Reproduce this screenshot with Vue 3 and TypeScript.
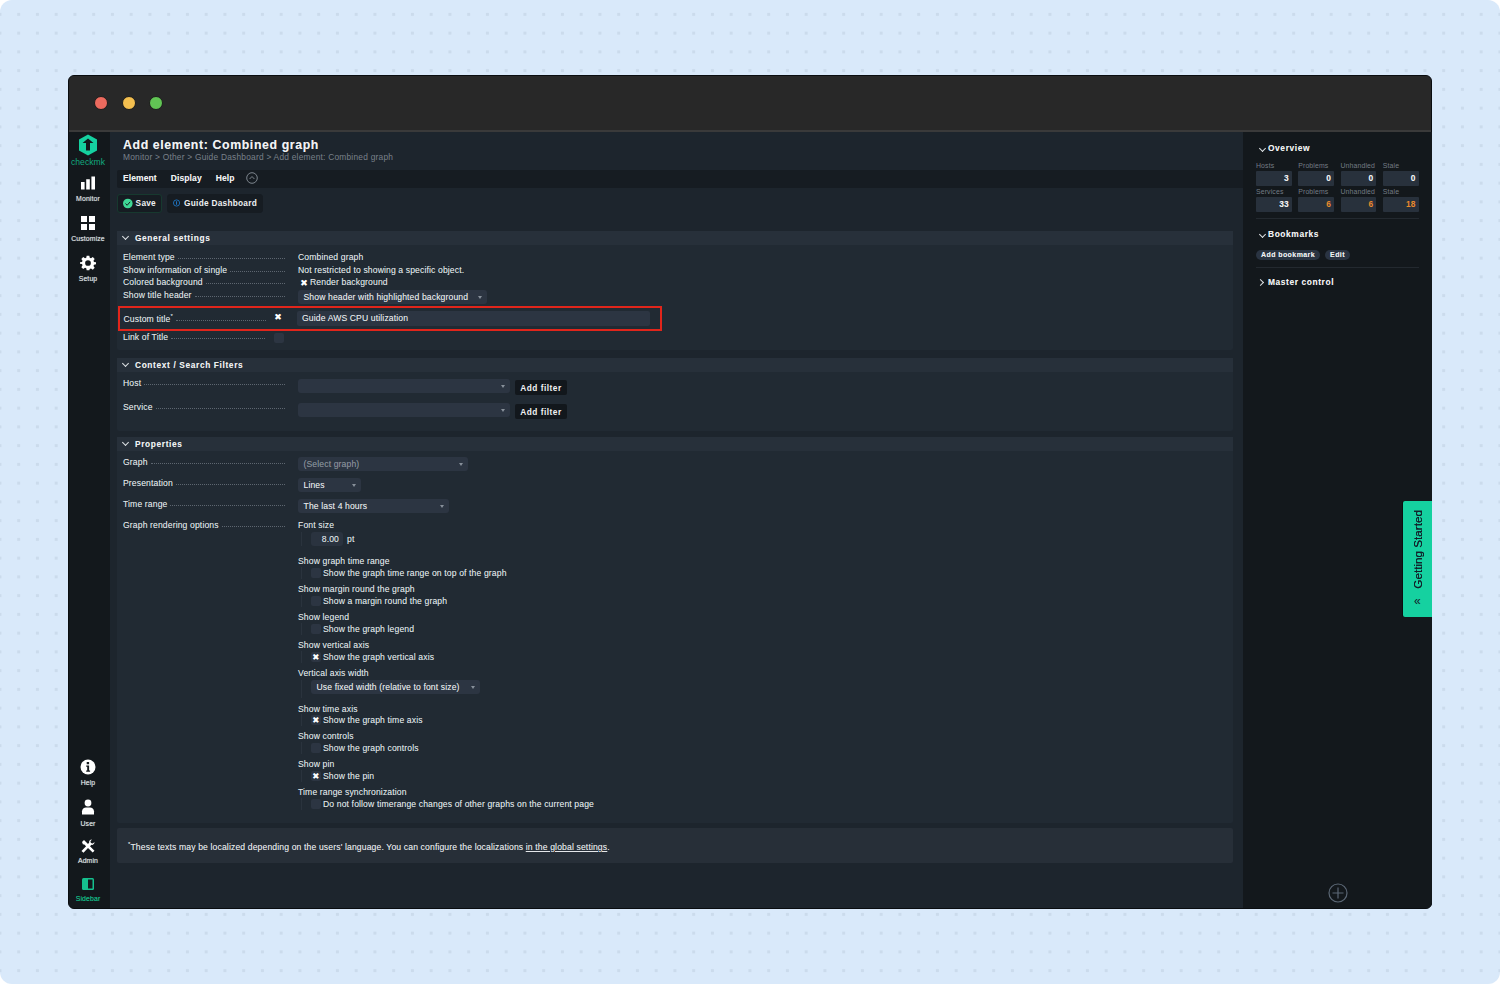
<script setup lang="ts">
const topRows = ['Element type', 'Show information of single']
const overview = [
  { labels: ['Hosts', 'Problems', 'Unhandled', 'Stale'], values: ['3', '0', '0', '0'], warn: false },
  { labels: ['Services', 'Problems', 'Unhandled', 'Stale'], values: ['33', '6', '6', '18'], warn: true },
]
const options1 = [
  { title: 'Show graph time range', text: 'Show the graph time range on top of the graph', on: false },
  { title: 'Show margin round the graph', text: 'Show a margin round the graph', on: false },
  { title: 'Show legend', text: 'Show the graph legend', on: false },
  { title: 'Show vertical axis', text: 'Show the graph vertical axis', on: true },
]
const options2 = [
  { title: 'Show time axis', text: 'Show the graph time axis', on: true },
  { title: 'Show controls', text: 'Show the graph controls', on: false },
  { title: 'Show pin', text: 'Show the pin', on: true },
  { title: 'Time range synchronization', text: 'Do not follow timerange changes of other graphs on the current page', on: false },
]
</script>

<template>
  <div class="page">
    <div class="window">
      <div class="titlebar">
        <span class="light red"></span><span class="light yellow"></span><span class="light green"></span>
      </div>
      <div class="app">
        <nav class="nav">
          <div class="logo">
            <svg width="20" height="22" viewBox="0 0 20 22"><path d="M10 0.5 19 5.5V16.5L10 21.5 1 16.5V5.5Z" fill="#15d1a0"/><path d="M4.500 9 10 4.500 15.500 9H12V16.500H8V9Z" fill="#13181c"/></svg>
            <span>checkmk</span>
          </div>
          <div class="nav-item first">
            <svg width="16" height="16" viewBox="0 0 16 16"><path d="M1 7h3.600v7.500H1zM6.200 4.200h3.600v10.300H6.200zM11.400 1.500H15v13h-3.600z" fill="#fff"/></svg>
            <span>Monitor</span>
          </div>
          <div class="nav-item">
            <svg width="16" height="16" viewBox="0 0 16 16"><path d="M1 1h6v6H1zM9 1h6v6H9zM1 9h6v6H1zM9 9h6v6H9z" fill="#fff"/></svg>
            <span>Customize</span>
          </div>
          <div class="nav-item">
            <svg width="16" height="16" viewBox="0 0 24 24"><path fill="#fff" fill-rule="evenodd" d="M10 1h4l.6 3.100 1.900.8 2.700-1.800 2.800 2.800-1.800 2.700.8 1.900L24 11v3l-3 .6-.8 1.900 1.800 2.700-2.800 2.800-2.700-1.800-1.900.8L14 23h-4l-.6-3-1.900-.8-2.700 1.800L2 18.200l1.800-2.700-.8-1.900L0 13v-2l3-.6.8-1.900L2 5.900 4.800 3.100l2.700 1.800 1.900-.8zM12 7.700a4.300 4.300 0 1 0 0 8.600 4.300 4.300 0 0 0 0-8.600z"/></svg>
            <span>Setup</span>
          </div>
          <div class="nav-spacer"></div>
          <div class="nav-item low help">
            <svg width="16" height="16" viewBox="0 0 16 16"><circle cx="8" cy="8" r="7.500" fill="#fff"/><path d="M6.700 3h2.400v2.200H6.700zM6.200 6.500h2.900v5h1v1.200H6.200v-1.200h1V7.700h-1z" fill="#13181c"/></svg>
            <span>Help</span>
          </div>
          <div class="nav-item low">
            <svg width="16" height="16" viewBox="0 0 16 16"><circle cx="8" cy="4" r="3.400" fill="#fff"/><path d="M2 15.500v-3.200C2 9.800 4 8.400 6 8.400h4c2 0 4 1.400 4 3.900v3.200z" fill="#fff"/></svg>
            <span>User</span>
          </div>
          <div class="nav-item admin">
            <svg width="14" height="14" viewBox="0 0 14 14"><path d="M1 3 3 1l4 4 1.200-1.400c-.4-1.400.7-3.100 2.800-3.100L9.400 2.200l.5 1.900 1.900.5L13.500 3c0 2.100-1.700 3.200-3.100 2.800L9 7.200l4.500 4.500-1.800 1.800L7 9l-4.500 4.700L.5 12l4.600-4.700L3 5.200l-1 .2z" fill="#fff"/></svg>
            <span>Admin</span>
          </div>
          <div class="nav-item sidebar-toggle">
            <svg width="12" height="12" viewBox="0 0 12 12"><rect width="12" height="12" rx="1.500" fill="#15c08e"/><rect x="6" y="1.500" width="4.500" height="9" fill="#13181c"/></svg>
            <span>Sidebar</span>
          </div>
        </nav>

        <main class="main">
          <header class="head">
            <h1>Add element: Combined graph</h1>
            <p>Monitor &gt; Other &gt; Guide Dashboard &gt; Add element: Combined graph</p>
          </header>
          <div class="menubar">
            <b>Element</b><b>Display</b><b>Help</b>
            <svg width="12" height="12" viewBox="0 0 12 12"><circle cx="6" cy="6" r="5.300" fill="none" stroke="#7d858d"/><path d="M3.600 7 6 4.500 8.400 7" fill="none" stroke="#7d858d"/></svg>
          </div>
          <div class="actions">
            <button class="btn save">
              <svg width="11" height="11" viewBox="0 0 11 11"><circle cx="5.500" cy="5.500" r="5.500" fill="#3fd896"/><path d="M2.800 5.600 4.800 7.500 8.200 3.600" fill="none" stroke="#13181c" stroke-width="1.100"/></svg>
              Save
            </button>
            <button class="btn guide">
              <svg width="10" height="10" viewBox="0 0 10 10"><circle cx="5" cy="5" r="4.400" fill="none" stroke="#1f7fd6" stroke-width="1.100"/><path d="M4.400 2.500h1.300v5H4.400z" fill="#1f7fd6"/></svg>
              Guide Dashboard
            </button>
          </div>

          <section class="card general">
            <div class="card-head"><i class="chev"></i>General settings</div>
            <div class="card-body">
              <div v-for="r in topRows" :key="r" class="row tight">
                <div class="lbl"><span>{{ r }}</span><em></em></div>
                <div class="val">{{ r === 'Element type' ? 'Combined graph' : 'Not restricted to showing a specific object.' }}</div>
              </div>
              <div class="row tight">
                <div class="lbl"><span>Colored background</span><em></em></div>
                <div class="val check-val"><span class="x">✖</span>Render background</div>
              </div>
              <div class="row tight">
                <div class="lbl"><span>Show title header</span><em></em></div>
                <div class="val"><div class="select s-header">Show header with highlighted background</div></div>
              </div>
              <div class="highlight">
                <div class="lbl custom"><span>Custom title<sup>*</sup></span><em></em></div>
                <span class="x standalone">✖</span>
                <div class="input-title">Guide AWS CPU utilization</div>
              </div>
              <div class="row link">
                <div class="lbl short"><span>Link of Title</span><em></em></div>
                <span class="box"></span>
              </div>
            </div>
          </section>

          <section class="card filters">
            <div class="card-head"><i class="chev"></i>Context / Search Filters</div>
            <div class="card-body">
              <div v-for="f in ['Host', 'Service']" :key="f" class="row filter">
                <div class="lbl"><span>{{ f }}</span><em></em></div>
                <div class="val inline"><div class="select s-filter"></div><button class="add">Add filter</button></div>
              </div>
            </div>
          </section>

          <section class="card props">
            <div class="card-head"><i class="chev"></i>Properties</div>
            <div class="card-body">
              <div class="row prop">
                <div class="lbl"><span>Graph</span><em></em></div>
                <div class="val"><div class="select s-graph">(Select graph)</div></div>
              </div>
              <div class="row prop">
                <div class="lbl"><span>Presentation</span><em></em></div>
                <div class="val"><div class="select s-lines">Lines</div></div>
              </div>
              <div class="row prop">
                <div class="lbl"><span>Time range</span><em></em></div>
                <div class="val"><div class="select s-time">The last 4 hours</div></div>
              </div>
              <div class="row render">
                <div class="lbl"><span>Graph rendering options</span><em></em></div>
                <div class="val opts">
                  <div class="opt font">
                    <div class="opt-title">Font size</div>
                    <div class="opt-sub"><div class="num">8.00</div><span class="unit">pt</span></div>
                  </div>
                  <div v-for="o in options1" :key="o.title" class="opt">
                    <div class="opt-title">{{ o.title }}</div>
                    <div class="opt-sub"><span class="box small"><span v-if="o.on" class="x">✖</span></span>{{ o.text }}</div>
                  </div>
                  <div class="opt axis">
                    <div class="opt-title">Vertical axis width</div>
                    <div class="opt-sub tall"><div class="select s-axis">Use fixed width (relative to font size)</div></div>
                  </div>
                  <div v-for="o in options2" :key="o.title" class="opt">
                    <div class="opt-title">{{ o.title }}</div>
                    <div class="opt-sub"><span class="box small"><span v-if="o.on" class="x">✖</span></span>{{ o.text }}</div>
                  </div>
                </div>
              </div>
            </div>
          </section>

          <div class="foot"><sup>*</sup>These texts may be localized depending on the users' language. You can configure the localizations <u>in the global settings</u>.</div>
        </main>

        <aside class="side">
          <div class="side-title"><i class="chev"></i>Overview</div>
          <div class="stats">
            <template v-for="(g, gi) in overview" :key="gi">
              <div v-for="(l, i) in g.labels" :key="l + i" class="stat">
                <span>{{ l }}</span>
                <b :class="{ warn: g.warn && i > 0 }">{{ g.values[i] }}</b>
              </div>
            </template>
          </div>
          <div class="rule r1"></div>
          <div class="side-title"><i class="chev"></i>Bookmarks</div>
          <div class="pills"><span>Add bookmark</span><span>Edit</span></div>
          <div class="rule r2"></div>
          <div class="side-title master"><i class="chev right"></i>Master control</div>
          <svg class="plus" width="20" height="20" viewBox="0 0 20 20"><circle cx="10" cy="10" r="9" fill="none" stroke="#5b6775" stroke-width="1.200"/><path d="M10 4.500v11M4.500 10h11" stroke="#5b6775" stroke-width="1.200"/></svg>
        </aside>
      </div>
      <div class="started"><span class="st-text">Getting Started</span><span class="st-ch">«</span></div>
    </div>
  </div>
</template>

<style>
html, body { margin: 0; background: #fff; }
</style>

<style scoped>
.page {
  box-sizing: border-box;
  width: 1500px;
  height: 984px;
  padding: 75px 68px;
  overflow: hidden;
  border-radius: 12px;
  background-color: #d9e9fa;
  background-image: radial-gradient(circle, #cbdbec 1.500px, transparent 2px);
  background-size: 18.750px 18.750px;
  background-position: 9.300px 5px;
  font-family: "Liberation Sans", Arial, sans-serif;
  color: #e4e7ea;
  font-size: 8.600px;
  letter-spacing: 0.13px;
  text-shadow: 0 0 0.6px rgba(255, 255, 255, 0.4);
}
.window {
  position: relative;
  box-sizing: border-box;
  height: 834px;
  border: 1px solid #0a0d10;
  border-radius: 6px;
  display: flex;
  flex-direction: column;
  background: #13181c;
}
.titlebar {
  flex: none;
  background: #282828;
  border-bottom: 2px solid #3a3a3a;
  border-radius: 5px 5px 0 0;
  display: flex;
  align-items: center;
  gap: 13.500px;
  padding-left: 25px;
  height: 54px;
}
.light { width: 14px; height: 14px; border-radius: 50%; border: 1px solid #1c1c1c; box-sizing: border-box; }
.red { background: #ec6a5e; }
.yellow { background: #f4bf4f; }
.green { background: #61c554; }
.app { flex: 1; display: flex; min-height: 0; }
.nav {
  flex: none;
  width: 41px;
  background: #13181c;
  display: flex;
  flex-direction: column;
  align-items: center;
  padding: 2px 3px 5px 0;
  box-sizing: border-box;
  border-radius: 0 0 0 5px;
}
.logo { display: flex; flex-direction: column; align-items: center; color: #12a97e; font-size: 8.600px; line-height: 10px; letter-spacing: 0; text-shadow: none; }
.logo span { margin-top: 1px; }
.nav-item { display: flex; flex-direction: column; align-items: center; height: 40px; gap: 4px; }
.nav-item.first { margin-top: 8px; }
.nav-item span { font-size: 6.900px; line-height: 8px; color: #dfe2e5; letter-spacing: 0.12px; text-shadow: 0 0 0.7px rgba(255, 255, 255, 0.6); }
.nav-spacer { flex: 1; }
.nav-item.low { gap: 5px; }
.nav-item.help { gap: 4px; }
.nav-item.admin { height: 39px; gap: 4px; }
.sidebar-toggle { height: 25px; gap: 5px; }
.sidebar-toggle span { color: #14c08c; text-shadow: 0 0 0.5px rgba(20, 192, 140, 0.6); }
.main { flex: none; width: 1133px; background: #1d252d; box-sizing: border-box; padding-left: 7px; }
.head { height: 38px; padding: 7px 0 0 6px; box-sizing: border-box; }
.head h1 { margin: 0; font-size: 12.300px; line-height: 13px; font-weight: 700; letter-spacing: 0.63px; color: #f2f3f4; }
.head p { margin: -0.500px 0 0; font-size: 8.400px; line-height: 10px; color: #79818a; letter-spacing: 0.22px; text-shadow: none; }
.menubar { height: 18px; background: #161c22; display: flex; align-items: center; padding: 0 0 2px 6px; box-sizing: border-box; border-radius: 2px 0 0 2px; }
.menubar b { font-size: 8.500px; margin-right: 14px; color: #f0f1f2; letter-spacing: 0.1px; }
.menubar svg { margin-left: -3px; }
.actions { display: flex; gap: 5px; height: 19px; margin-top: 6px; }
.btn { display: flex; align-items: center; gap: 3px; height: 19px; padding: 0 5px 1px; border-radius: 3px; background: #161c22; border: 1px solid #161c22; color: #eef0f1; font: 700 8.300px "Liberation Sans", Arial, sans-serif; letter-spacing: 0.25px; box-sizing: border-box; white-space: nowrap; }
.guide { width: 96px; gap: 4px; }
.save { width: 45px; border-color: #17392f; }
.card { margin-right: 10px; background: #212a33; border-radius: 2px; }
.general { margin-top: 18px; height: 119px; }
.filters { margin-top: 8px; height: 73px; }
.props { margin-top: 6px; height: 386px; }
.card-head { height: 14px; background: #27303a; display: flex; align-items: center; padding-left: 6px; font-weight: 700; font-size: 8.300px; letter-spacing: 0.65px; color: #eef0f1; }
.chev { display: inline-block; width: 4px; height: 4px; border-right: 1px solid #dfe2e5; border-bottom: 1px solid #dfe2e5; transform: rotate(45deg); margin: -3px 7px 0 0; }
.chev.right { transform: rotate(-45deg); margin: 0 6px 0 -2px; }
.card-body { position: relative; padding-left: 6px; }
.row { display: flex; }
.tight { height: 12.670px; line-height: 13px; }
.general .card-body { padding-top: 6px; }
.lbl { flex: none; width: 162px; display: flex; align-items: baseline; gap: 3px; color: #dfe2e5; line-height: 13px; height: 13px; }
.lbl span { white-space: nowrap; }
.lbl em { flex: 1; border-bottom: 1px dotted #5d6670; height: 0; transform: translateY(-1px); }
.val { margin-left: 13px; color: #dfe2e5; white-space: nowrap; line-height: 13px; }
.check-val { display: flex; align-items: center; }
.check-val .x { width: 12px; margin-left: 0; }
.x { display: inline-block; color: #fff; font-size: 9px; line-height: 10px; text-align: center; font-family: "DejaVu Sans", sans-serif; }
.select { position: relative; box-sizing: border-box; height: 14px; line-height: 15px; padding-left: 5.500px; background: #2c3542; border-radius: 3px; color: #e4e7ea; }
.select::after { content: ""; position: absolute; right: 5px; top: 6px; border-left: 2.500px solid transparent; border-right: 2.500px solid transparent; border-top: 3px solid #87909a; }
.s-header { width: 189px; margin-top: -4px; transform: translateY(5px); }
.highlight { position: relative; box-sizing: border-box; margin: 4px 0 0 -5px; width: 544px; height: 25px; border: 2px solid #e1251b; display: flex; align-items: center; padding-left: 3.500px; }
.lbl.custom { width: 142px; margin-top: 3px; }
.lbl.custom sup { font-size: 6px; line-height: 0; }
.standalone { position: absolute; left: 153px; top: 4px; width: 10px; font-size: 9px; }
.input-title { position: absolute; left: 177px; top: 3px; width: 353px; height: 15px; line-height: 15px; background: #2c3542; border-radius: 2px; padding-left: 5px; box-sizing: border-box; color: #e4e7ea; }
.link { margin-top: 0; height: 13px; align-items: flex-start; }
.lbl.short { width: 142px; }
.box { flex: none; display: inline-flex; align-items: center; justify-content: center; width: 10px; height: 10px; margin: 2px 0 0 9px; background: #2c3542; border-radius: 2px; }
.filters .card-body { padding-top: 5px; }
.filter { height: 24px; }
.inline { display: flex; gap: 5px; }
.s-filter { width: 212px; margin-top: 2px; }
.add { height: 15px; width: 52px; padding: 0; margin-top: 3px; border: 0; background: #12171c; color: #f0f1f2; border-radius: 2px; font: 700 8.300px "Liberation Sans", Arial, sans-serif; letter-spacing: 0.5px; }
.props .card-body { padding-top: 5px; }
.prop { height: 21px; }
.prop .select { margin-top: 1px; }
.s-graph { width: 170px; color: #7d858f; }
.s-lines { width: 63px; }
.s-time { width: 151px; }
.opts { display: flex; flex-direction: column; white-space: nowrap; }
.opt { height: 28px; }
.opt-title { height: 12px; line-height: 12px; color: #dfe2e5; }
.opt-sub { margin-left: 3px; padding-left: 9px; height: 12px; border-left: 1px solid #2a333d; display: flex; align-items: center; line-height: 12px; color: #dfe2e5; }
.box.small { margin: 0 2px 0 0; width: 10px; height: 10px; }
.box.small .x { font-size: 8.500px; }
.opt.font { height: 36px; }
.font .opt-sub { height: 14px; margin-top: 1px; }
.num { width: 32px; height: 14px; box-sizing: border-box; line-height: 14px; text-align: right; padding-right: 4px; background: #2a333f; border-radius: 3px; }
.unit { margin-left: 4px; }
.opt.axis { height: 36px; }
.opt-sub.tall { height: 18px; padding-left: 9px; align-items: flex-start; margin-top: 1px; }
.s-axis { width: 169px; }
.opt.axis + .opt { height: 27px; }
.opt.axis + .opt .opt-title { height: 11px; }
.foot { margin: 5px 10px 0 0; height: 35px; line-height: 38px; background: #272f38; padding-left: 11px; border-radius: 2px; color: #e4e7ea; letter-spacing: 0.14px; }
.foot sup { font-size: 6px; line-height: 0; }
.side { position: relative; flex: 1; background: #13181c; padding: 11px 13px 0; box-sizing: border-box; border-radius: 0 0 5px 0; }
.side-title { font-weight: 700; font-size: 8.400px; letter-spacing: 0.6px; color: #f0f1f2; line-height: 10px; padding-left: 4px; }
.side-title .chev { margin-right: 3px; }
.side-title .chev.right { margin: 0 5px 0 -2px; }
.stats { display: grid; grid-template-columns: repeat(4, 35.750px); column-gap: 6.500px; margin-top: 7.500px; }
.stat { height: 26px; display: flex; flex-direction: column; }
.stat span { height: 10px; line-height: 10px; font-size: 6.900px; color: #747c85; text-shadow: none; }
.stat b { height: 15px; line-height: 15px; background: #28313c; text-align: right; padding-right: 3px; font-size: 8.400px; color: #eef0f1; border-radius: 1px; }
.stat b.warn { color: #e98a2d; text-shadow: none; }
.rule { height: 1px; background: #23292f; }
.r1 { margin: 5.500px 0 10px; }
.pills { display: flex; gap: 5px; margin-top: 11px; }
.pills span { height: 10px; line-height: 10px; padding: 0 5px; border-radius: 5px; background: #2a3442; font-size: 7px; font-weight: 700; letter-spacing: 0.42px; color: #eef0f1; }
.r2 { margin: 7px 0 9px; }
.plus { position: absolute; left: 85px; top: 751px; }
.started { position: absolute; right: -1px; top: 425px; width: 29px; height: 116px; background: #15d1a0; border-radius: 2px 0 0 2px; box-shadow: -1px 0 0 #0a0d10; color: #13202a; letter-spacing: 0; text-shadow: 0 0 0.5px #13202a; }
.st-text { position: absolute; top: 9px; left: 8px; writing-mode: vertical-rl; transform: rotate(180deg); font-size: 11.700px; }
.st-ch { position: absolute; top: 93px; left: 11px; font-size: 12px; line-height: 14px; text-shadow: none; font-weight: 400; }
</style>
